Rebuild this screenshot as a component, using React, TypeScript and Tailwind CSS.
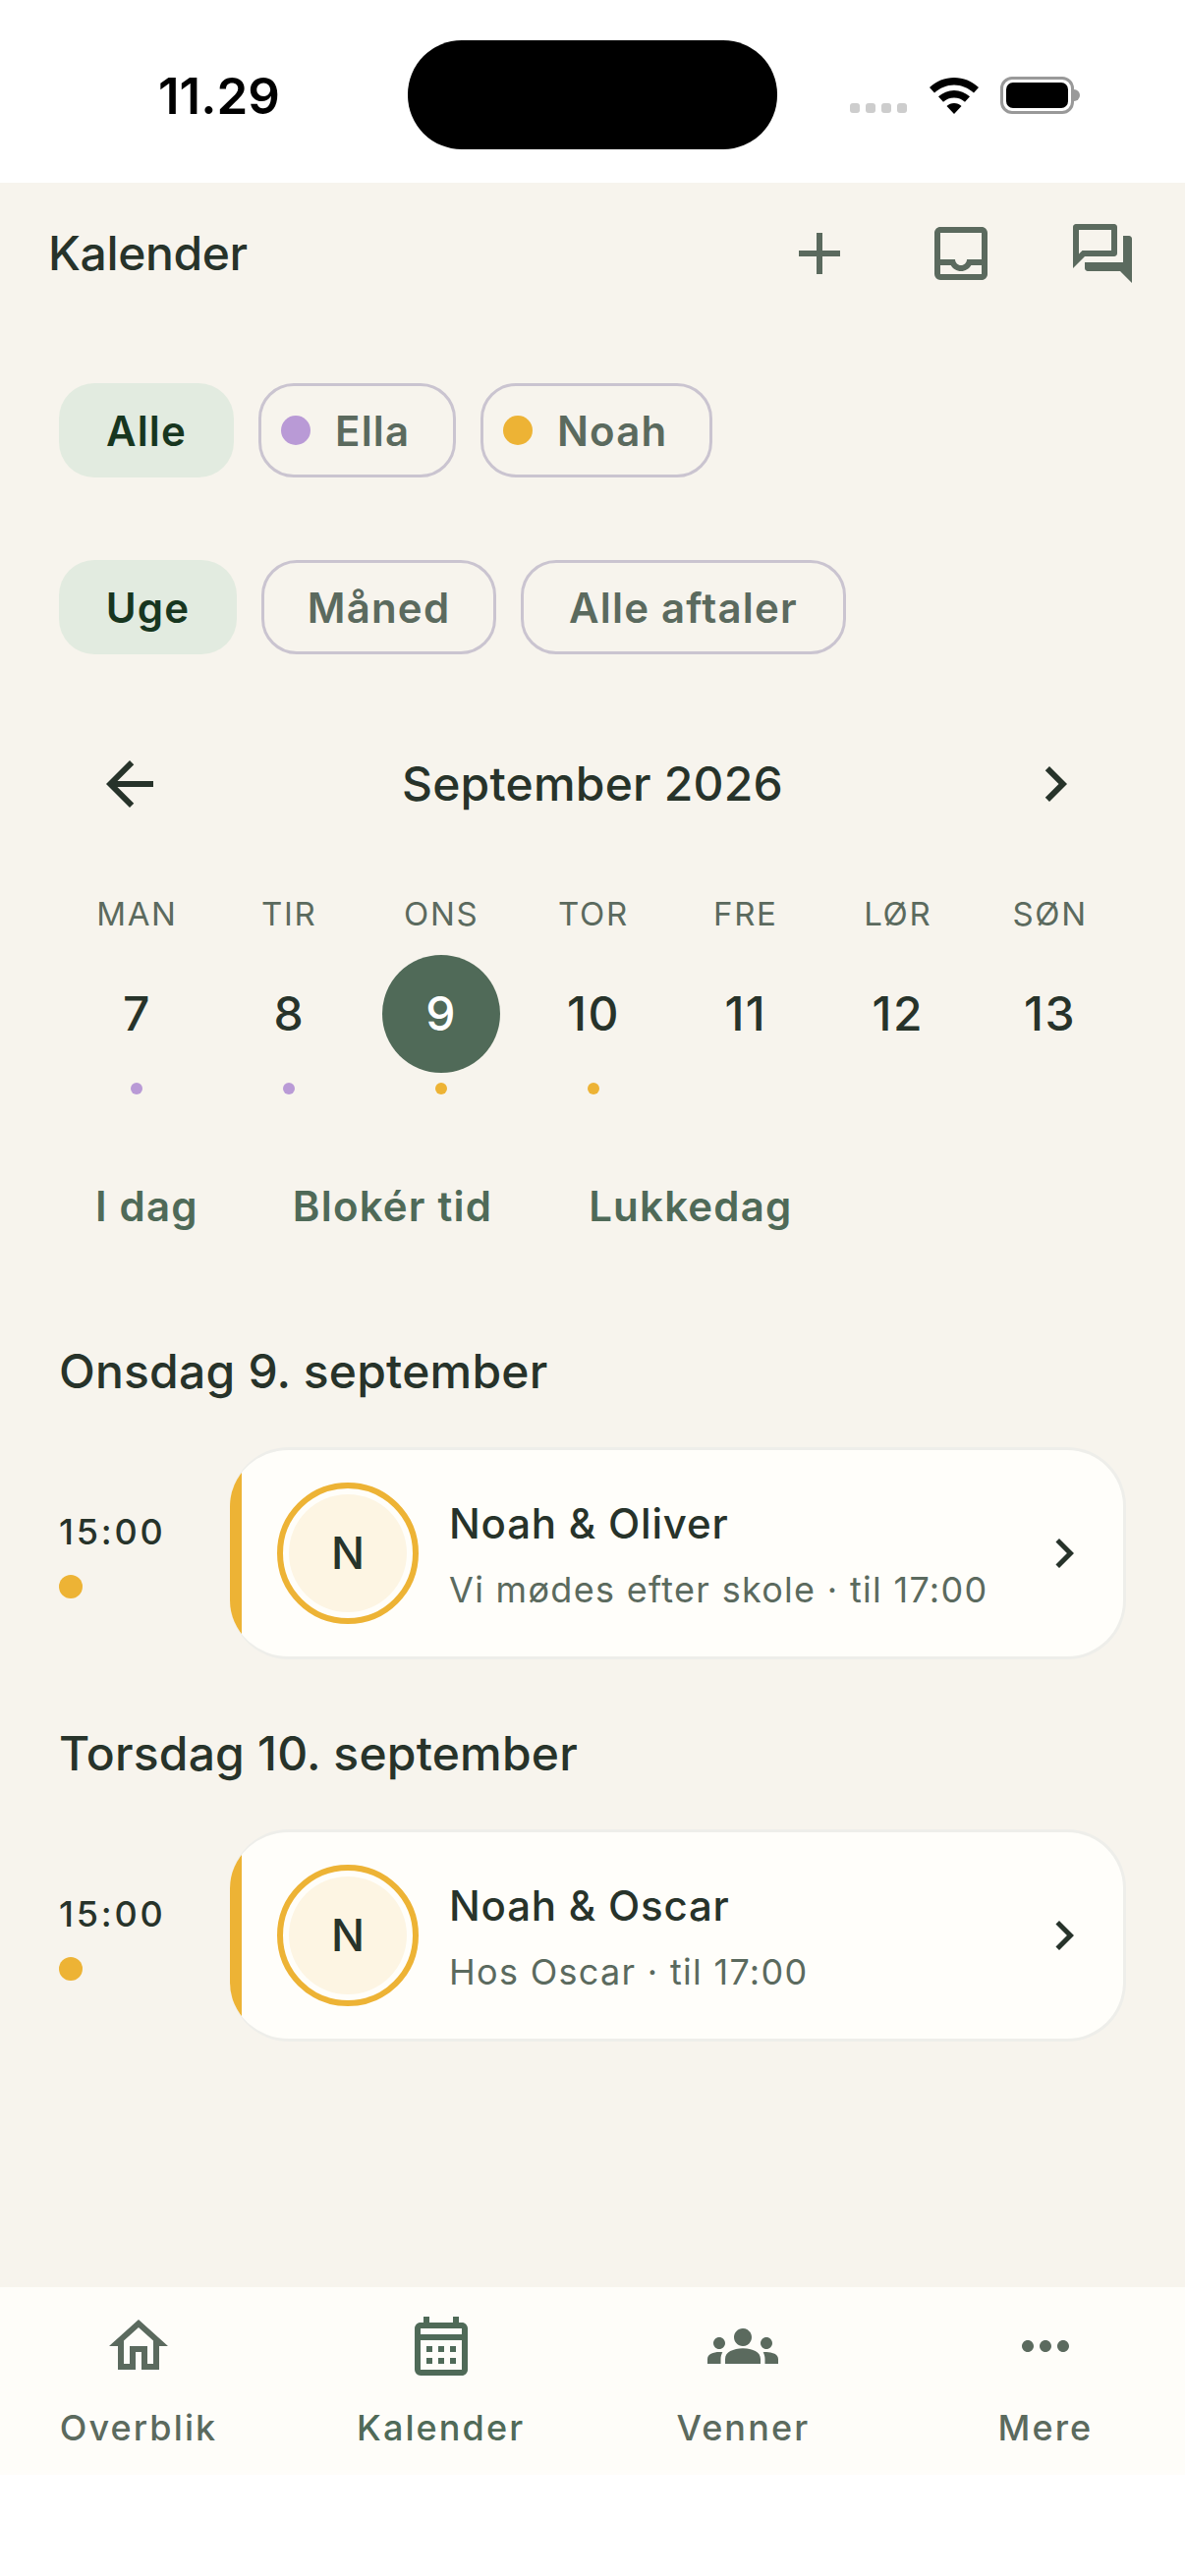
import {
  MdAdd,
  MdArrowBack,
  MdChevronRight,
  MdGroups,
  MdMoreHoriz,
  MdOutlineCalendarMonth,
  MdOutlineForum,
  MdOutlineHome,
  MdOutlineInbox,
} from 'react-icons/md';

const PURPLE = 'bg-[#b99ad6]';
const AMBER = 'bg-[#edb335]';

const days = [
  { label: 'MAN', day: 7, dot: PURPLE },
  { label: 'TIR', day: 8, dot: PURPLE },
  { label: 'ONS', day: 9, dot: AMBER, selected: true },
  { label: 'TOR', day: 10, dot: AMBER },
  { label: 'FRE', day: 11 },
  { label: 'LØR', day: 12 },
  { label: 'SØN', day: 13 },
];

function Chip({ label, active, dot, className }: { label: string; active?: boolean; dot?: string; className: string }) {
  return (
    <div
      className={`flex h-[96px] items-center rounded-[36px] text-[42px] font-semibold tracking-[1.2px] ${
        dot ? 'justify-start pl-[20px]' : 'justify-center'
      } ${active ? 'bg-[#e2ebe0] text-[#17361f]' : 'border-[3px] border-[#cac4d0] text-[#5b6a5e]'} ${className}`}
    >
      {dot && <span className={`mr-[25px] h-[30px] w-[30px] rounded-full ${dot}`} />}
      {label}
    </div>
  );
}

function EventRow({ title, sub }: { title: string; sub: string }) {
  return (
    <div className="mt-[47px] flex items-center">
      <div className="w-[174px] shrink-0">
        <div className="text-[36px] leading-[48px] font-medium tracking-[2.8px] text-[#27332a]">15:00</div>
        <div className={`mt-[20px] h-[24px] w-[24px] rounded-full ${AMBER}`} />
      </div>
      <div className="flex h-[216px] flex-1 items-center overflow-hidden rounded-[60px] border-[3px] border-l-0 border-[#eeeeea] bg-[#fffefa]">
        <div className={`h-full w-[12px] shrink-0 ${AMBER}`} />
        <div className="ml-[36px] flex h-[144px] w-[144px] shrink-0 items-center justify-center rounded-full border-[6px] border-[#edb335] p-[6px]">
          <div className="flex h-full w-full items-center justify-center rounded-full bg-[#fdf5e3] text-[45px] font-medium text-[#27332a]">
            N
          </div>
        </div>
        <div className="ml-[31px] flex-1 pt-[3px]">
          <div className="text-[42px] leading-[60px] font-[550] tracking-[0.8px] text-[#27332a]">{title}</div>
          <div className="mt-[10px] text-[36px] leading-[54px] tracking-[1.3px] text-[#5b6a5e]">{sub}</div>
        </div>
        <MdChevronRight className="mr-[30px] shrink-0 text-[60px] text-[#27332a]" />
      </div>
    </div>
  );
}

function NavItem({ label, icon, active }: { label: string; icon: React.ReactNode; active?: boolean }) {
  return (
    <div className={`flex w-[200px] flex-col items-center ${active ? 'text-[#4f6a58]' : 'text-[#5b6a5e]'}`}>
      <div className="flex h-[72px] items-center justify-center text-[72px]">{icon}</div>
      <div className="mt-[25px] text-[36px] leading-[44px] font-medium tracking-[2.1px]">{label}</div>
    </div>
  );
}

export default function App() {
  return (
    <div className="flex h-[2622px] w-[1206px] flex-col bg-white font-[Inter,sans-serif]">
      {/* status bar */}
      <div className="flex h-[186px] shrink-0 items-start bg-white">
        <div className="w-[415px] pt-[68px] pl-[161px] text-[51px] leading-[60px] font-semibold text-black">11.29</div>
        <div className="mt-[41px] h-[111px] w-[376px] rounded-[55px] bg-black" />
        <div className="ml-[74px] flex items-end pt-[78px]">
          <div className="mb-[1px] flex gap-[6px]">
            <span className="h-[10px] w-[10px] rounded-[3px] bg-[#cdcdcd]" />
            <span className="h-[10px] w-[10px] rounded-[3px] bg-[#cdcdcd]" />
            <span className="h-[10px] w-[10px] rounded-[3px] bg-[#cdcdcd]" />
            <span className="h-[10px] w-[10px] rounded-[3px] bg-[#cdcdcd]" />
          </div>
          <svg className="ml-[23px]" width="50" height="37" viewBox="0 0 50 37" fill="#000">
            <path d="M25 0C15.500 0 7 3.600 0 10l5 5.500C10.500 10.500 17.500 7.500 25 7.500s14.500 3 20 8l5-5.500C43 3.600 34.500 0 25 0Z" />
            <path d="M25 13c-6 0-11.500 2.300-16 6.300l5 5.400c3-2.700 6.800-4.200 11-4.200s8 1.500 11 4.200l5-5.400C36.500 15.300 31 13 25 13Z" />
            <path d="M25 26c-3 0-5.500 1-7.500 2.900L25 37l7.500-8.100C30.500 27 28 26 25 26Z" />
          </svg>
          <div className="ml-[22px] flex items-center">
            <div className="h-[38px] w-[75px] rounded-[12px] border-[3px] border-[#999999] p-[3px]">
              <div className="h-full w-full rounded-[7px] bg-black" />
            </div>
            <div className="h-[12px] w-[6px] rounded-r-full bg-[#999999]" />
          </div>
        </div>
      </div>

      <div className="flex-1 bg-[#f7f4ed]">
        {/* top bar */}
        <div className="flex h-[144px] items-center">
          <div className="ml-[49px] text-[48px] font-medium tracking-[-0.4px] text-[#27332a]">Kalender</div>
          <div className="ml-auto mr-[48px] flex items-center gap-[72px] text-[72px] text-[#5b6a5e]">
            <MdAdd />
            <MdOutlineInbox />
            <MdOutlineForum />
          </div>
        </div>

        <div className="px-[60px]">
          <div className="mt-[60px] flex gap-[25px]">
            <Chip label="Alle" active className="w-[178px]" />
            <Chip label="Ella" dot={PURPLE} className="w-[201px]" />
            <Chip label="Noah" dot={AMBER} className="w-[236px]" />
          </div>
          <div className="mt-[84px] flex gap-[25px]">
            <Chip label="Uge" active className="w-[181px]" />
            <Chip label="Måned" className="w-[239px]" />
            <Chip label="Alle aftaler" className="w-[331px]" />
          </div>

          {/* month header */}
          <div className="mt-[96px] flex h-[72px] items-center justify-between text-[#27332a]">
            <MdArrowBack className="ml-[36px] text-[72px]" />
            <div className="text-[48px] font-[550] tracking-[0.2px]">September 2026</div>
            <MdChevronRight className="mr-[36px] text-[72px]" />
          </div>

          {/* week strip */}
          <div className="mt-[76px] grid grid-cols-7 pl-[2px]">
            {days.map((d) => (
              <div key={d.label} className="flex flex-col items-center">
                <div className="text-[33px] leading-[40px] tracking-[1.65px] text-[#5b6a5e]">{d.label}</div>
                <div
                  className={`mt-[22px] flex h-[120px] w-[120px] items-center justify-center rounded-full text-[48px] font-[550] tracking-[1.5px] ${
                    d.selected ? 'bg-[#506a58] text-white' : 'text-[#27332a]'
                  }`}
                >
                  {d.day}
                </div>
                <div className={`mt-[10px] h-[12px] w-[12px] rounded-full ${d.dot ?? ''}`} />
              </div>
            ))}
          </div>

          {/* quick actions */}
          <div className="mt-[86px] flex h-[54px] items-center pl-[37px] text-[42px] font-semibold tracking-[1.2px] text-[#4f6a58]">
            <span>I dag</span>
            <span className="ml-[96px]">Blokér tid</span>
            <span className="ml-[98px]">Lukkedag</span>
          </div>

          <div className="mt-[112px] text-[48px] leading-[60px] font-[550] tracking-[0.2px] text-[#27332a]">Onsdag 9. september</div>
          <EventRow title="Noah & Oliver" sub="Vi mødes efter skole · til 17:00" />
          <div className="mt-[66px] text-[48px] leading-[60px] font-[550] tracking-[0.2px] text-[#27332a]">Torsdag 10. september</div>
          <EventRow title="Noah & Oscar" sub="Hos Oscar · til 17:00" />
        </div>
      </div>

      {/* bottom nav */}
      <div className="flex h-[191px] shrink-0 justify-between bg-[#fefdf9] pt-[24px] pr-[42px] pl-[41px]">
        <NavItem label="Overblik" icon={<MdOutlineHome />} />
        <NavItem label="Kalender" icon={<MdOutlineCalendarMonth />} active />
        <NavItem label="Venner" icon={<MdGroups />} />
        <NavItem label="Mere" icon={<MdMoreHoriz />} />
      </div>
      <div className="h-[103px] shrink-0 bg-white" />
    </div>
  );
}
